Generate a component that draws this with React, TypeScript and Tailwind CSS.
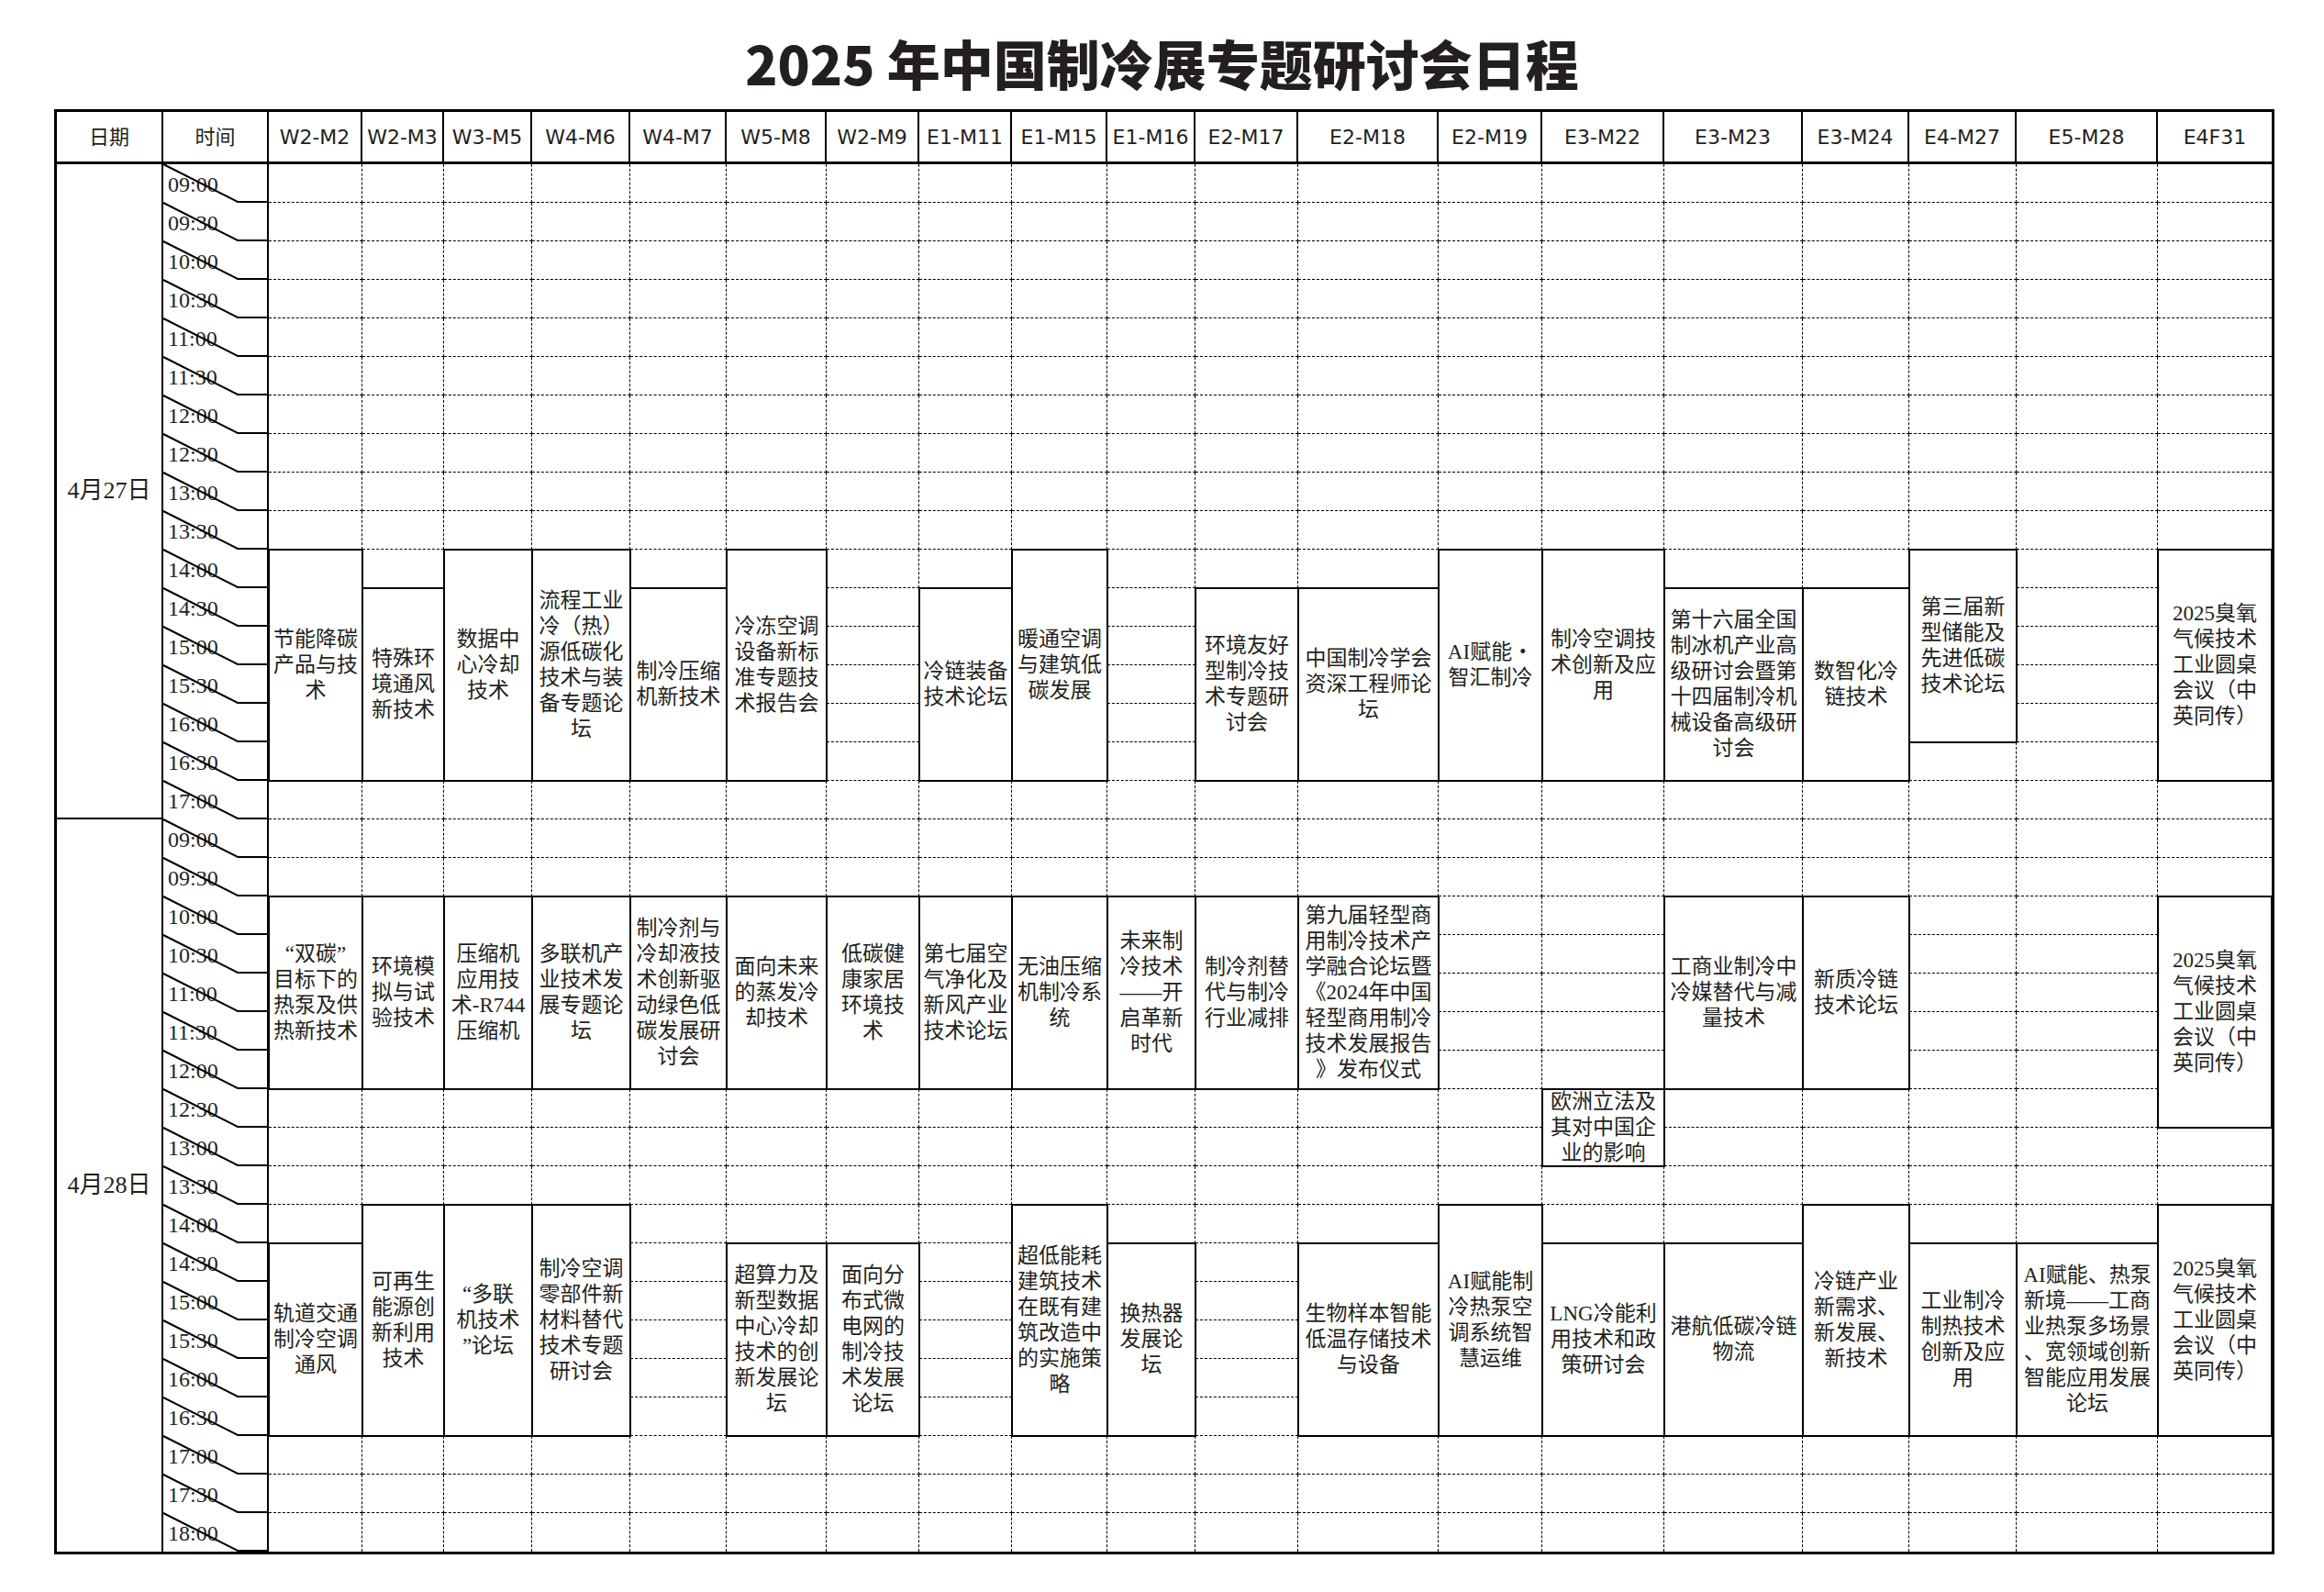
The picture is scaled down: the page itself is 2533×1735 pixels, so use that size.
import React from 'react';

const ROOMS = [
  'W2-M2', 'W2-M3', 'W3-M5', 'W4-M6', 'W4-M7', 'W5-M8', 'W2-M9', 'E1-M11', 'E1-M15', 'E1-M16',
  'E2-M17', 'E2-M18', 'E2-M19', 'E3-M22', 'E3-M23', 'E3-M24', 'E4-M27', 'E5-M28', 'E4F31',
];

const DAYS = [
  {
    label: '4月27日',
    times: ['09:00', '09:30', '10:00', '10:30', '11:00', '11:30', '12:00', '12:30', '13:00', '13:30', '14:00', '14:30', '15:00', '15:30', '16:00', '16:30', '17:00'],
  },
  {
    label: '4月28日',
    times: ['09:00', '09:30', '10:00', '10:30', '11:00', '11:30', '12:00', '12:30', '13:00', '13:30', '14:00', '14:30', '15:00', '15:30', '16:00', '16:30', '17:00', '17:30', '18:00'],
  },
];

type Session = { room: string; row: number; span: number; lines: string[] };

const OZONE = ['2025臭氧', '气候技术', '工业圆桌', '会议（中', '英同传）'];

// row index counts from 09:00 on day one; day two starts at row 17
const SESSIONS: Session[] = [
  // 4月27日 下午
  { room: 'W2-M2', row: 10, span: 6, lines: ['节能降碳', '产品与技', '术'] },
  { room: 'W2-M3', row: 11, span: 5, lines: ['特殊环', '境通风', '新技术'] },
  { room: 'W3-M5', row: 10, span: 6, lines: ['数据中', '心冷却', '技术'] },
  { room: 'W4-M6', row: 10, span: 6, lines: ['流程工业', '冷（热）', '源低碳化', '技术与装', '备专题论', '坛'] },
  { room: 'W4-M7', row: 11, span: 5, lines: ['制冷压缩', '机新技术'] },
  { room: 'W5-M8', row: 10, span: 6, lines: ['冷冻空调', '设备新标', '准专题技', '术报告会'] },
  { room: 'E1-M11', row: 11, span: 5, lines: ['冷链装备', '技术论坛'] },
  { room: 'E1-M15', row: 10, span: 6, lines: ['暖通空调', '与建筑低', '碳发展'] },
  { room: 'E2-M17', row: 11, span: 5, lines: ['环境友好', '型制冷技', '术专题研', '讨会'] },
  { room: 'E2-M18', row: 11, span: 5, lines: ['中国制冷学会', '资深工程师论', '坛'] },
  { room: 'E2-M19', row: 10, span: 6, lines: ['AI赋能・', '智汇制冷'] },
  { room: 'E3-M22', row: 10, span: 6, lines: ['制冷空调技', '术创新及应', '用'] },
  { room: 'E3-M23', row: 11, span: 5, lines: ['第十六届全国', '制冰机产业高', '级研讨会暨第', '十四届制冷机', '械设备高级研', '讨会'] },
  { room: 'E3-M24', row: 11, span: 5, lines: ['数智化冷', '链技术'] },
  { room: 'E4-M27', row: 10, span: 5, lines: ['第三届新', '型储能及', '先进低碳', '技术论坛'] },
  { room: 'E4F31', row: 10, span: 6, lines: OZONE },

  // 4月28日 上午
  { room: 'W2-M2', row: 19, span: 5, lines: ['“双碳”', '目标下的', '热泵及供', '热新技术'] },
  { room: 'W2-M3', row: 19, span: 5, lines: ['环境模', '拟与试', '验技术'] },
  { room: 'W3-M5', row: 19, span: 5, lines: ['压缩机', '应用技', '术-R744', '压缩机'] },
  { room: 'W4-M6', row: 19, span: 5, lines: ['多联机产', '业技术发', '展专题论', '坛'] },
  { room: 'W4-M7', row: 19, span: 5, lines: ['制冷剂与', '冷却液技', '术创新驱', '动绿色低', '碳发展研', '讨会'] },
  { room: 'W5-M8', row: 19, span: 5, lines: ['面向未来', '的蒸发冷', '却技术'] },
  { room: 'W2-M9', row: 19, span: 5, lines: ['低碳健', '康家居', '环境技', '术'] },
  { room: 'E1-M11', row: 19, span: 5, lines: ['第七届空', '气净化及', '新风产业', '技术论坛'] },
  { room: 'E1-M15', row: 19, span: 5, lines: ['无油压缩', '机制冷系', '统'] },
  { room: 'E1-M16', row: 19, span: 5, lines: ['未来制', '冷技术', '——开', '启革新', '时代'] },
  { room: 'E2-M17', row: 19, span: 5, lines: ['制冷剂替', '代与制冷', '行业减排'] },
  { room: 'E2-M18', row: 19, span: 5, lines: ['第九届轻型商', '用制冷技术产', '学融合论坛暨', '《2024年中国', '轻型商用制冷', '技术发展报告', '》发布仪式'] },
  { room: 'E3-M22', row: 24, span: 2, lines: ['欧洲立法及', '其对中国企', '业的影响'] },
  { room: 'E3-M23', row: 19, span: 5, lines: ['工商业制冷中', '冷媒替代与减', '量技术'] },
  { room: 'E3-M24', row: 19, span: 5, lines: ['新质冷链', '技术论坛'] },
  { room: 'E4F31', row: 19, span: 6, lines: OZONE },

  // 4月28日 下午
  { room: 'W2-M2', row: 28, span: 5, lines: ['轨道交通', '制冷空调', '通风'] },
  { room: 'W2-M3', row: 27, span: 6, lines: ['可再生', '能源创', '新利用', '技术'] },
  { room: 'W3-M5', row: 27, span: 6, lines: ['“多联', '机技术', '”论坛'] },
  { room: 'W4-M6', row: 27, span: 6, lines: ['制冷空调', '零部件新', '材料替代', '技术专题', '研讨会'] },
  { room: 'W5-M8', row: 28, span: 5, lines: ['超算力及', '新型数据', '中心冷却', '技术的创', '新发展论', '坛'] },
  { room: 'W2-M9', row: 28, span: 5, lines: ['面向分', '布式微', '电网的', '制冷技', '术发展', '论坛'] },
  { room: 'E1-M15', row: 27, span: 6, lines: ['超低能耗', '建筑技术', '在既有建', '筑改造中', '的实施策', '略'] },
  { room: 'E1-M16', row: 28, span: 5, lines: ['换热器', '发展论', '坛'] },
  { room: 'E2-M18', row: 28, span: 5, lines: ['生物样本智能', '低温存储技术', '与设备'] },
  { room: 'E2-M19', row: 27, span: 6, lines: ['AI赋能制', '冷热泵空', '调系统智', '慧运维'] },
  { room: 'E3-M22', row: 28, span: 5, lines: ['LNG冷能利', '用技术和政', '策研讨会'] },
  { room: 'E3-M23', row: 28, span: 5, lines: ['港航低碳冷链', '物流'] },
  { room: 'E3-M24', row: 27, span: 6, lines: ['冷链产业', '新需求、', '新发展、', '新技术'] },
  { room: 'E4-M27', row: 28, span: 5, lines: ['工业制冷', '制热技术', '创新及应', '用'] },
  { room: 'E5-M28', row: 28, span: 5, lines: ['AI赋能、热泵', '新境——工商', '业热泵多场景', '、宽领域创新', '智能应用发展', '论坛'] },
  { room: 'E4F31', row: 27, span: 6, lines: OZONE },
];

const SPAN: Record<number, string> = {
  1: '',
  2: 'row-span-2',
  5: 'row-span-5',
  6: 'row-span-6',
  17: 'row-span-17',
  19: 'row-span-19',
};

const TIMES = DAYS.flatMap((d) => d.times);
const LAST_ROW = TIMES.length - 1;

const TimeCell: React.FC<{ time: string }> = ({ time }) => (
  <div className="relative border-r-2 border-black">
    <span className="block pl-[5px] pt-[10px] font-['Liberation_Serif',serif] text-[24px] leading-none">{time}</span>
    <svg className="pointer-events-none absolute inset-0 overflow-visible" width="113" height="42" viewBox="0 0 113 42">
      <polyline points="0,0 81,41 113,41" fill="none" stroke="#000" strokeWidth="2" />
    </svg>
  </div>
);

const App: React.FC = () => {
  const cells: React.ReactNode[] = [];

  cells.push(
    <div key="h-date" className="flex items-center justify-center border-b-[3px] border-r-2 border-black">日期</div>,
    <div key="h-time" className="flex items-center justify-center border-b-[3px] border-r-2 border-black">时间</div>,
  );
  ROOMS.forEach((room, c) => {
    cells.push(
      <div
        key={`h-${room}`}
        className={`flex items-center justify-center border-b-[3px] border-black ${c < ROOMS.length - 1 ? 'border-r-2' : ''}`}
      >
        {room}
      </div>
    );
  });

  TIMES.forEach((time, r) => {
    if (r === 0 || r === DAYS[0].times.length) {
      const day = r === 0 ? DAYS[0] : DAYS[1];
      cells.push(
        <div
          key={`d-${r}`}
          className={`flex items-center justify-center border-r-2 border-black font-['Liberation_Serif','Noto_Sans_CJK_SC',serif] text-[26px] ${SPAN[day.times.length]} ${r === 0 ? 'border-b-2' : ''}`}
        >
          {day.label}
        </div>
      );
    }
    cells.push(<TimeCell key={`t-${r}`} time={time} />);

    ROOMS.forEach((room, c) => {
      const start = SESSIONS.find((s) => s.room === room && s.row === r);
      if (start) {
        cells.push(
          <div
            key={`s-${room}-${r}`}
            className={`relative z-10 -m-px flex flex-col items-center justify-center border-2 border-black bg-white text-center ${SPAN[start.span]}`}
          >
            {start.lines.map((line, i) => (
              <span key={i} className="block whitespace-nowrap">{line}</span>
            ))}
          </div>
        );
        return;
      }
      const covered = SESSIONS.some((s) => s.room === room && r > s.row && r < s.row + s.span);
      if (covered) return;
      cells.push(
        <div
          key={`e-${room}-${r}`}
          className={`border-dashed border-black ${c < ROOMS.length - 1 ? 'border-r' : ''} ${r < LAST_ROW ? 'border-b' : ''}`}
        />
      );
    });
  });

  return (
    <div className="min-h-screen bg-white text-[#231f20]">
      <div className="flex h-[119px] items-center justify-center pt-[16px]">
        <h1 className="font-['Noto_Sans_CJK_SC',sans-serif] text-[58px] font-black leading-none">
          2025 年中国制冷展专题研讨会日程
        </h1>
      </div>
      <div className="pl-[59px]">
        <div className="grid w-fit grid-cols-[116px_115px_102px_89px_96px_107px_105px_109px_101px_101px_104px_96px_112px_153px_113px_133px_151px_116px_117px_154px_124px] grid-rows-[57px_repeat(36,42px)] border-[3px] border-black font-['DejaVu_Sans','Noto_Sans_CJK_SC',sans-serif] text-[22px]">
          {cells.slice(0, ROOMS.length + 2)}
          <div className="contents font-['Liberation_Serif','Noto_Sans_CJK_SC',serif] text-[23px] leading-[28px]">
            {cells.slice(ROOMS.length + 2)}
          </div>
        </div>
      </div>
    </div>
  );
};

export default App;
